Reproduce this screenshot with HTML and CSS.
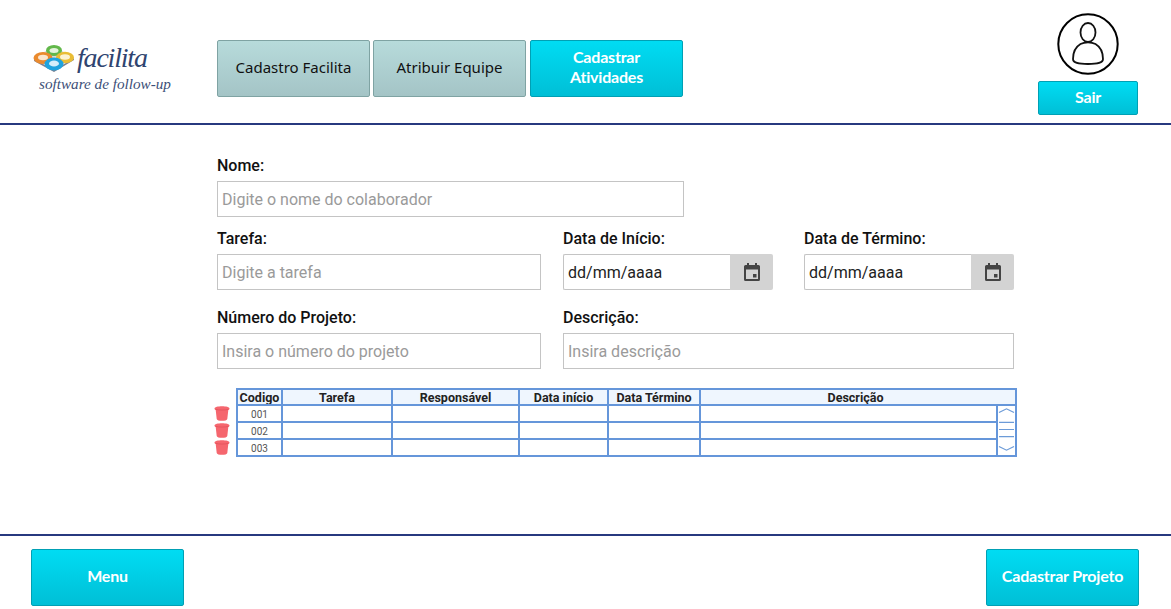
FILE: index.html
```html
<!DOCTYPE html>
<html lang="pt-BR">

<head>
    <meta charset="utf-8">
    <title>Facilita - Cadastrar Atividades</title>
    <link rel="stylesheet" href="styles.css">
</head>

<body>
    <header class="top-bar">
        <div class="logo">
            <div class="logo-row">
                <svg class="logo-mark" width="42" height="28" viewBox="0 0 42 28">
                    <path d="M1 15 L21 26 L41 14 L41 16 L21 28 L1 17 Z" fill="#7d8190"/>
                    <path d="M1 14 L21 2 L41 14 L21 26 Z" fill="#d9dbe0"/>
                    <ellipse cx="21" cy="6.500" rx="8" ry="5.500" fill="#62b84a"/>
                    <ellipse cx="21" cy="6.500" rx="4.500" ry="2.500" fill="#e4f3dc"/>
                    <ellipse cx="10" cy="14" rx="9.500" ry="6" fill="#ea8a2e"/>
                    <ellipse cx="10" cy="13.500" rx="5" ry="2.800" fill="#fbe6cf"/>
                    <ellipse cx="32" cy="13.500" rx="9" ry="5.800" fill="#e9bd35"/>
                    <ellipse cx="32" cy="13" rx="5" ry="2.700" fill="#fbf2d2"/>
                    <ellipse cx="21" cy="20" rx="9.500" ry="6.500" fill="#1fa3de"/>
                    <ellipse cx="21" cy="19.500" rx="5" ry="3" fill="#d5eefa"/>
                </svg>
                <span class="logo-name">facilita</span>
            </div>
            <div class="logo-sub">software de follow-up</div>
        </div>

        <nav class="top-nav">
            <a class="btn btn-gray" href="#">Cadastro Facilita</a>
            <a class="btn btn-gray" href="#">Atribuir Equipe</a>
            <a class="btn btn-cyan" href="#">Cadastrar<br>Atividades</a>
        </nav>

        <div class="user-box">
            <svg class="user-icon" width="62" height="62" viewBox="0 0 62 62">
                <circle cx="31" cy="31" r="29.7" fill="none" stroke="#000" stroke-width="2"/>
                <ellipse cx="31" cy="19.500" rx="7.500" ry="9.500" fill="none" stroke="#111" stroke-width="1.800"/>
                <path d="M23.500 31 C18.500 34 16 40 16 46 C16 50 21 51 31 51 C41 51 46 50 46 46 C46 40 43.500 34 38.500 31 C34.500 28.800 27.500 28.800 23.500 31 Z" fill="none" stroke="#111" stroke-width="1.800"/>
            </svg>
            <a class="btn btn-cyan btn-small" href="#">Sair</a>
        </div>
    </header>

    <main class="content">
        <form class="form">
            <div class="row row-nome">
                <div class="field field-nome">
                    <label for="nome">Nome:</label>
                    <input id="nome" type="text" placeholder="Digite o nome do colaborador">
                </div>
            </div>

            <div class="row row-tarefa">
                <div class="field field-main">
                    <label for="tarefa">Tarefa:</label>
                    <input id="tarefa" type="text" placeholder="Digite a tarefa">
                </div>
                <div class="field field-date">
                    <label for="inicio">Data de Início:</label>
                    <div class="date-group">
                        <input id="inicio" type="text" value="dd/mm/aaaa">
                        <span class="date-btn">
                            <svg width="16" height="18" viewBox="0 0 16 18"><path d="M3 0h2v2h6V0h2v2h1.500A1.500 1.500 0 0 1 16 3.500v13a1.500 1.500 0 0 1-1.500 1.500h-13A1.500 1.500 0 0 1 0 16.500v-13A1.500 1.500 0 0 1 1.500 2H3zM2 6.500V16h12V6.500zM9 11h3.500v3.500H9z" fill="#444"/></svg>
                        </span>
                    </div>
                </div>
                <div class="field field-date">
                    <label for="termino">Data de Término:</label>
                    <div class="date-group">
                        <input id="termino" type="text" value="dd/mm/aaaa">
                        <span class="date-btn">
                            <svg width="16" height="18" viewBox="0 0 16 18"><path d="M3 0h2v2h6V0h2v2h1.500A1.500 1.500 0 0 1 16 3.500v13a1.500 1.500 0 0 1-1.500 1.500h-13A1.500 1.500 0 0 1 0 16.500v-13A1.500 1.500 0 0 1 1.500 2H3zM2 6.500V16h12V6.500zM9 11h3.500v3.500H9z" fill="#444"/></svg>
                        </span>
                    </div>
                </div>
            </div>

            <div class="row row-projeto">
                <div class="field field-main">
                    <label for="projeto">Número do Projeto:</label>
                    <input id="projeto" type="text" placeholder="Insira o número do projeto">
                </div>
                <div class="field field-desc">
                    <label for="descricao">Descrição:</label>
                    <input id="descricao" type="text" placeholder="Insira descrição">
                </div>
            </div>
        </form>

        <div class="grid-wrap">
            <div class="trash-col">
                <svg class="trash" width="16" height="15" viewBox="0 0 16 15"><path d="M.5 2.500C.5 1 4 .2 8 .2s7.500 .8 7.500 2.300c0 .8-.5 1.300-1.200 1.600l-1 8.900c-.2 1.300-2.500 1.800-5.300 1.800s-5.100-.5-5.300-1.800l-1-8.900C1 3.800 .5 3.300 .5 2.500z" fill="#f5666e"/><path d="M1.500 3.300C4 4.300 12 4.300 14.500 3.300" fill="none" stroke="#e2505a" stroke-width=".8"/></svg>
                <svg class="trash" width="16" height="15" viewBox="0 0 16 15"><path d="M.5 2.500C.5 1 4 .2 8 .2s7.500 .8 7.500 2.300c0 .8-.5 1.300-1.200 1.600l-1 8.900c-.2 1.300-2.500 1.800-5.300 1.800s-5.100-.5-5.300-1.800l-1-8.900C1 3.800 .5 3.300 .5 2.500z" fill="#f5666e"/><path d="M1.500 3.300C4 4.300 12 4.300 14.500 3.300" fill="none" stroke="#e2505a" stroke-width=".8"/></svg>
                <svg class="trash" width="16" height="15" viewBox="0 0 16 15"><path d="M.5 2.500C.5 1 4 .2 8 .2s7.500 .8 7.500 2.300c0 .8-.5 1.300-1.200 1.600l-1 8.900c-.2 1.300-2.500 1.800-5.300 1.800s-5.100-.5-5.300-1.800l-1-8.900C1 3.800 .5 3.300 .5 2.500z" fill="#f5666e"/><path d="M1.500 3.300C4 4.300 12 4.300 14.500 3.300" fill="none" stroke="#e2505a" stroke-width=".8"/></svg>
            </div>
            <table class="grid">
                <colgroup>
                    <col class="c-cod">
                    <col class="c-tarefa">
                    <col class="c-resp">
                    <col class="c-ini">
                    <col class="c-fim">
                    <col class="c-desc">
                    <col class="c-scroll">
                </colgroup>
                <thead>
                    <tr>
                        <th>Codigo</th>
                        <th>Tarefa</th>
                        <th>Responsável</th>
                        <th>Data início</th>
                        <th>Data Término</th>
                        <th class="th-desc" colspan="2">Descrição</th>
                    </tr>
                </thead>
                <tbody>
                    <tr>
                        <td class="cod">001</td><td></td><td></td><td></td><td></td><td></td>
                        <td class="scroll" rowspan="3">
                            <svg width="17" height="47" viewBox="0 0 17 50" preserveAspectRatio="none">
                                <path d="M1 7 L8.500 3 L16 7" fill="none" stroke="#6c9bd8" stroke-width="1.300"/>
                                <path d="M1 17.500H16M1 25H16M1 32.500H16" stroke="#6c9bd8" stroke-width="1.300"/>
                                <path d="M1 43 L8.500 47 L16 43" fill="none" stroke="#6c9bd8" stroke-width="1.300"/>
                            </svg>
                        </td>
                    </tr>
                    <tr>
                        <td class="cod">002</td><td></td><td></td><td></td><td></td><td></td>
                    </tr>
                    <tr>
                        <td class="cod">003</td><td></td><td></td><td></td><td></td><td></td>
                    </tr>
                </tbody>
            </table>
        </div>
    </main>

    <footer class="bottom-bar">
        <a class="btn btn-cyan" href="#">Menu</a>
        <a class="btn btn-cyan" href="#">Cadastrar Projeto</a>
    </footer>
</body>
</html>
```

FILE: styles.css
```css
* {
    margin: 0;
    padding: 0;
    box-sizing: border-box;
}

html, body {
    height: 100%;
}

body {
    display: flex;
    flex-direction: column;
    height: 609px;
    overflow: hidden;
    background: #fff;
    color: #111;
    font-family: Roboto, "Liberation Sans", sans-serif;
}

/* buttons */
.btn {
    display: flex;
    align-items: center;
    justify-content: center;
    width: 153px;
    height: 57px;
    padding-bottom: 3px;
    border-radius: 2px;
    text-align: center;
    text-decoration: none;
    font-family: "Noto Sans", sans-serif;
    font-size: 15px;
    line-height: 20px;
}

.btn-gray {
    padding-bottom: 4px;
    background: linear-gradient(#b7dbdb, #a4c4c6);
    border: 1px solid #7fa3a3;
    color: #111;
}

.btn-cyan {
    background: linear-gradient(#00dcf3, #00bfd6);
    border: 1px solid #00a0b4;
    color: #fff;
    font-family: Lato, sans-serif;
    font-weight: 700;
    font-size: 16px;
    letter-spacing: -0.2px;
}

.btn-small {
    width: 100px;
    height: 34px;
    padding-bottom: 2px;
}

/* header */
.top-bar {
    display: flex;
    height: 125px;
    padding-top: 13px;
    border-bottom: 2px solid #27397f;
}

.logo {
    width: 217px;
    padding: 29px 0 0 33px;
}

.logo-row {
    display: flex;
    align-items: center;
    gap: 2px;
    height: 32px;
}

.logo-name {
    font-family: "Liberation Serif", serif;
    font-style: italic;
    font-size: 28px;
    letter-spacing: -1.200px;
    color: #2f4470;
}

.logo-sub {
    margin: 1px 0 0 6px;
    font-family: "Liberation Serif", serif;
    font-style: italic;
    font-size: 15.200px;
    white-space: nowrap;
    color: #3d4f78;
}

.top-nav {
    display: flex;
    gap: 3px;
    padding-top: 27px;
}

.top-nav .btn-cyan {
    margin-left: 1px;
}

.user-box {
    display: flex;
    flex-direction: column;
    align-items: center;
    gap: 6px;
    width: 100px;
    margin-left: auto;
    margin-right: 33px;
}

/* form */
.content {
    flex: 1;
    padding: 31px 0 0 217px;
}

.row {
    display: flex;
    gap: 22px;
}

.row-tarefa {
    margin-top: 12px;
}

.row-projeto {
    margin-top: 18px;
}

.field label {
    display: block;
    height: 19px;
    margin-bottom: 6px;
    font-size: 16px;
    font-weight: 500;
    line-height: 19px;
}

.field input {
    display: block;
    width: 100%;
    height: 36px;
    padding: 0 4px;
    border: 1px solid #c4c4c4;
    font-family: inherit;
    font-size: 16px;
    color: #222;
    outline: none;
}

.field input::placeholder {
    color: #9a9a9a;
}

.field-nome {
    width: 467px;
}

.field-main {
    width: 324px;
}

.field-date {
    width: 210px;
}

.field-date + .field-date {
    margin-left: 9px;
}

.field-desc {
    width: 451px;
}

.date-group {
    display: flex;
}

.date-group input {
    flex: 1;
    min-width: 0;
    border-right: 0;
    border-radius: 2px 0 0 2px;
}

.date-btn {
    display: flex;
    align-items: center;
    justify-content: center;
    width: 43px;
    height: 36px;
    background: #d3d3d3;
    border-radius: 0 2px 2px 0;
}

/* table */
.grid-wrap {
    display: flex;
    margin-top: 19px;
    margin-left: -3px;
}

.trash-col {
    display: flex;
    flex-direction: column;
    gap: 2px;
    width: 22px;
    padding-top: 18px;
}

.trash {
    display: block;
}

.grid {
    width: 781px;
    border-collapse: collapse;
    table-layout: fixed;
    border: 2px solid #6596da;
}

.grid th,
.grid td {
    height: 17px;
    padding: 0;
    border: 2px solid #6596da;
    text-align: center;
    overflow: hidden;
}

.grid th {
    height: 16px;
    background: #eff6fe;
    font-size: 12.500px;
    font-weight: 700;
    line-height: 13px;
    color: #222;
}

.grid .th-desc {
    padding-right: 5px;
}

.grid .cod {
    padding-top: 2px;
    font-size: 10px;
    line-height: 11px;
    color: #555;
}

.grid .scroll {
    vertical-align: top;
}

.scroll svg {
    display: block;
}

.c-cod { width: 45px; }
.c-tarefa { width: 110px; }
.c-resp { width: 127px; }
.c-ini { width: 89px; }
.c-fim { width: 92px; }
.c-scroll { width: 19px; }

/* footer */
.bottom-bar {
    display: flex;
    justify-content: space-between;
    height: 75px;
    padding: 13px 32px 0 31px;
    border-top: 2px solid #27397f;
}
```
